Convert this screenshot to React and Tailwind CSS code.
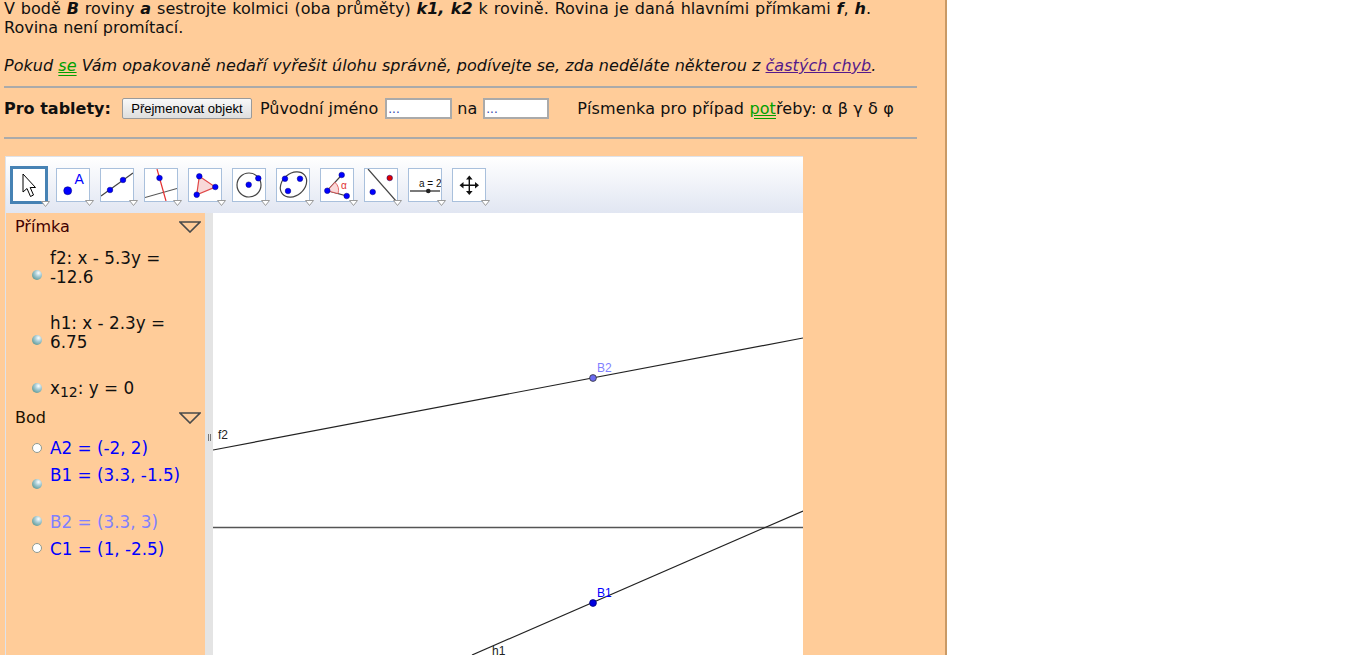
const Caret = ({ className }) => (
  <svg width="9" height="6" viewBox="0 0 9 6" className={`absolute ${className}`}>
    <path d="M0.5 0.5H8.5L4.5 5.5Z" fill="#fff" stroke="#9a9a9a" />
  </svg>
);

const Dot = ({ x, y, fill = "#0000ff" }) => (
  <circle cx={x} cy={y} r="2.8" fill={fill} stroke="#00007a" strokeWidth="0.5" />
);

const Tool = ({ children }) => (
  <div className="relative h-[34px] w-[34px] shrink-0 border border-[#a9c0dc] bg-white">
    <svg width="32" height="32" viewBox="0 0 32 32" className="block">
      {children}
    </svg>
    <Caret className="left-[28px] top-[31px]" />
  </div>
);

const Ball = ({ hollow, className = "" }) =>
  hollow ? (
    <span className={`block h-[10px] w-[10px] shrink-0 rounded-full border border-[#8f9a90] bg-white ${className}`} />
  ) : (
    <span
      className={`block h-[10px] w-[10px] shrink-0 rounded-full bg-[radial-gradient(circle_at_65%_30%,#ffffff_0%,#a9cdd6_35%,#5f9a97_80%,#6e8f8a_100%)] ${className}`}
    />
  );

const Header = ({ title, color }) => (
  <div className={`flex h-[27px] items-center justify-between pl-[9px] pr-[4px] text-[16px] ${color}`}>
    <span>{title}</span>
    <svg width="22" height="12" viewBox="0 0 22 12">
      <path d="M1 1H21L11 11Z" fill="none" stroke="#4a4a4a" strokeWidth="1.6" />
    </svg>
  </div>
);

const App = () => {
  return (
    <div className="h-[655px] overflow-hidden bg-white">
      <div
        className="h-[655px] w-[947px] overflow-hidden border-r-2 border-[#c99a66] bg-[#ffcc99] pl-[4px] text-[16px] leading-[19px] text-[#101010]"
        style={{ fontFamily: '"DejaVu Sans", Verdana, sans-serif' }}
      >
        <p className="-mt-[1px] w-[867px] text-justify">
          V bodě <b><i>B</i></b> roviny <b><i>a</i></b> sestrojte kolmici (oba průměty) <b><i>k1, k2</i></b> k rovině. Rovina je daná hlavními přímkami <b><i>f</i></b>, <b><i>h</i></b>. Rovina není promítací.
        </p>
        <p className="mt-[19px] italic tracking-[0.04px]">
          Pokud <span className="text-[#00a000] underline decoration-double">se</span> Vám opakovaně nedaří vyřešit úlohu správně, podívejte se, zda neděláte některou z <a className="text-[#551a8b] underline">častých chyb</a>.
        </p>

        <div className="mt-[11px] h-[2px] w-[913px] bg-[#aaaaaa]" />

        <div className="mt-[10px] flex h-[21px] items-center whitespace-pre">
          <b>Pro tablety:</b>
          <button
            className="ml-[11px] h-[21px] w-[130px] rounded-[2px] border border-[#9a9a9a] bg-gradient-to-b from-[#f8f8f8] to-[#dedede] text-[13px] text-black"
            style={{ fontFamily: '"Liberation Sans", Arial, sans-serif' }}
          >
            Přejmenovat objekt
          </button>
          <span className="ml-[8px]">Původní jméno</span>
          <input
            readOnly
            value="..."
            className="ml-[7px] h-[21px] w-[67px] border-2 border-[#aaaaaa] bg-white px-[1px] text-[12px] text-[#3344aa]"
          />
          <span className="ml-[5px]">na</span>
          <input
            readOnly
            value="..."
            className="ml-[6px] h-[21px] w-[66px] border-2 border-[#aaaaaa] bg-white px-[1px] text-[12px] text-[#3344aa]"
          />
          <span className="ml-[28px] tracking-[0.13px]">
            Písmenka pro případ <span className="text-[#00a000] underline decoration-double">pot</span>řeby: α β γ δ φ
          </span>
        </div>

        <div className="mt-[18px] h-[2px] w-[913px] bg-[#aaaaaa]" />

        {/* Applet */}
        <div className="ml-[1px] mt-[17px] w-[798px] border-l border-t border-[#dfe3ea]">
          <div className="flex h-[56px] items-center gap-[8px] bg-gradient-to-b from-white to-[#e1e6f2] pb-[1px] pl-[4px]">
            <div className="relative flex h-[38px] w-[38px] shrink-0 items-center justify-center border-[3px] border-[#4682b4] bg-white">
              <svg width="18" height="26" viewBox="0 0 18 26">
                <path d="M3 2V20L7 16.5L10.5 24.5L13.5 23L10.2 15.5H15.5Z" fill="#fff" stroke="#000" strokeWidth="1" strokeLinejoin="round" />
              </svg>
              <Caret className="left-[28px] top-[32px]" />
            </div>
            <div className="flex gap-[10px]">
              <Tool>
                <circle cx="10.7" cy="21.7" r="4" fill="#0000ff" stroke="#00007a" strokeWidth="0.5" />
                <text x="17.5" y="15" fontSize="14" fill="#0000ff" fontFamily="Liberation Sans, sans-serif">A</text>
              </Tool>
              <Tool>
                <path d="M0 27L32 4" stroke="#444" strokeWidth="1.2" />
                <Dot x="9" y="21" />
                <Dot x="22" y="11" />
              </Tool>
              <Tool>
                <path d="M0 28.5L32 19.5" stroke="#555" strokeWidth="1.2" />
                <path d="M12 0L21 32" stroke="#e53030" strokeWidth="1.2" />
                <Dot x="14.5" y="9" />
              </Tool>
              <Tool>
                <path d="M10.3 7.3L26.3 18L7.7 25.7Z" fill="#f8d8d8" stroke="#e04848" strokeWidth="1.2" />
                <Dot x="10.3" y="7.3" />
                <Dot x="26.3" y="18" />
                <Dot x="7.7" y="25.7" />
              </Tool>
              <Tool>
                <circle cx="16" cy="16" r="12" fill="none" stroke="#444" strokeWidth="1.2" />
                <Dot x="15.7" y="15.7" />
                <Dot x="25.3" y="9.3" />
              </Tool>
              <Tool>
                <ellipse cx="16.5" cy="15.5" rx="14.5" ry="11" transform="rotate(-40 16.5 15.5)" fill="none" stroke="#444" strokeWidth="1.2" />
                <Dot x="8" y="9.7" />
                <Dot x="23" y="9.7" />
                <Dot x="11" y="22" />
              </Tool>
              <Tool>
                <path d="M20.7 6L6.3 21.7L25.7 27" fill="none" stroke="#444" strokeWidth="1.2" />
                <path d="M6.3 21.7L14 13.3A11 11 0 0 1 17 24.6Z" fill="#fadada" stroke="#e04848" strokeWidth="0.8" />
                <text x="20" y="20" fontSize="10" fill="#e03030" fontFamily="Liberation Sans, sans-serif">α</text>
                <Dot x="20.7" y="6" />
                <Dot x="6.3" y="21.7" />
                <Dot x="25.7" y="27" />
              </Tool>
              <Tool>
                <path d="M3 0L31 32" stroke="#444" strokeWidth="1.2" />
                <Dot x="7.7" y="23" />
                <Dot x="24.7" y="9" fill="#e00000" />
              </Tool>
              <Tool>
                <text x="10" y="17.7" fontSize="10" fill="#111" fontFamily="Liberation Sans, sans-serif">a = 2</text>
                <path d="M1 22H31" stroke="#222" strokeWidth="1.2" />
                <circle cx="19.3" cy="22" r="2.3" fill="#222" />
              </Tool>
              <Tool>
                <path d="M16.3 9V24M9 16.3H24" stroke="#111" strokeWidth="1.4" />
                <path d="M16.3 6.5L13 10.5H19.6ZM16.3 26L13 22H19.6ZM6.5 16.3L10.5 13V19.6ZM26 16.3L22 13V19.6Z" fill="#111" />
              </Tool>
            </div>
          </div>

          <div className="flex h-[443px]">
            {/* Algebra */}
            <div className="w-[199px] shrink-0 bg-[#ffcc99] text-[16.8px] leading-[19px]">
              <Header title="Přímka" color="text-[#400000]" />
              <div className="flex h-[65px] items-start pl-[26px] pt-[9px] text-[#101010]">
                <Ball className="mr-[8px] mt-[21px]" />
                <span>f2: x - 5.3y =<br />-12.6</span>
              </div>
              <div className="flex h-[60px] items-start pl-[26px] text-[#101010]">
                <Ball className="mr-[8px] mt-[30px]" />
                <span className="mt-[9px]">h1: x - 2.3y =<br />6.75</span>
              </div>
              <div className="mt-[9px] flex h-[28px] items-center pl-[26px] text-[#101010]">
                <Ball className="mr-[8px]" />
                <span>x<sub className="text-[14px]">12</sub>: y = 0</span>
              </div>
              <div className="mt-[2px]"><Header title="Bod" color="text-[#201000]" /></div>
              <div className="mt-[4px] flex h-[27px] items-center pl-[26px] text-[#0000ff]">
                <Ball hollow className="mb-[2px] mr-[8px]" />
                <span>A2 = (-2, 2)</span>
              </div>
              <div className="mt-[4px] flex h-[36px] items-start pl-[26px] text-[#0000ff]">
                <Ball className="mr-[8px] mt-[13px]" />
                <span>B1 = (3.3, -1.5)</span>
              </div>
              <div className="mt-[7px] flex h-[27px] items-center pl-[26px] text-[#8080ff]">
                <Ball className="mb-[4px] mr-[8px]" />
                <span>B2 = (3.3, 3)</span>
              </div>
              <div className="flex h-[27px] items-center pl-[26px] text-[#0000ff]">
                <Ball hollow className="mb-[4px] mr-[8px]" />
                <span>C1 = (1, -2.5)</span>
              </div>
            </div>

            {/* Divider */}
            <div className="relative w-[8px] shrink-0 bg-[#e4e4e4]">
              <span className="absolute left-[3px] top-[221px] h-[7px] w-[1px] bg-[#777777]" />
              <span className="absolute left-[5px] top-[221px] h-[7px] w-[1px] bg-[#777777]" />
            </div>

            {/* Graphics */}
            <div className="h-full flex-1 bg-white">
              <svg width="590" height="443" viewBox="0 0 590 443" className="block" fontFamily="Liberation Sans, sans-serif" fontSize="12">
                <line x1="0" y1="237" x2="590" y2="125" stroke="#222" strokeWidth="1.2" />
                <line x1="0" y1="314.5" x2="590" y2="314.5" stroke="#555" strokeWidth="1.6" />
                <line x1="259" y1="442" x2="590" y2="298" stroke="#222" strokeWidth="1.2" />
                <circle cx="380" cy="165" r="3.4" fill="#6a6af0" stroke="#333" strokeWidth="0.8" />
                <circle cx="380" cy="390" r="3.4" fill="#0000e0" stroke="#00007a" strokeWidth="0.8" />
                <text x="384" y="159" fill="#8080ff">B2</text>
                <text x="384" y="384" fill="#0000ff">B1</text>
                <text x="5" y="226" fill="#222">f2</text>
                <text x="279" y="442" fill="#222">h1</text>
              </svg>
            </div>
          </div>
        </div>
      </div>
    </div>
  );
};

export default App;
